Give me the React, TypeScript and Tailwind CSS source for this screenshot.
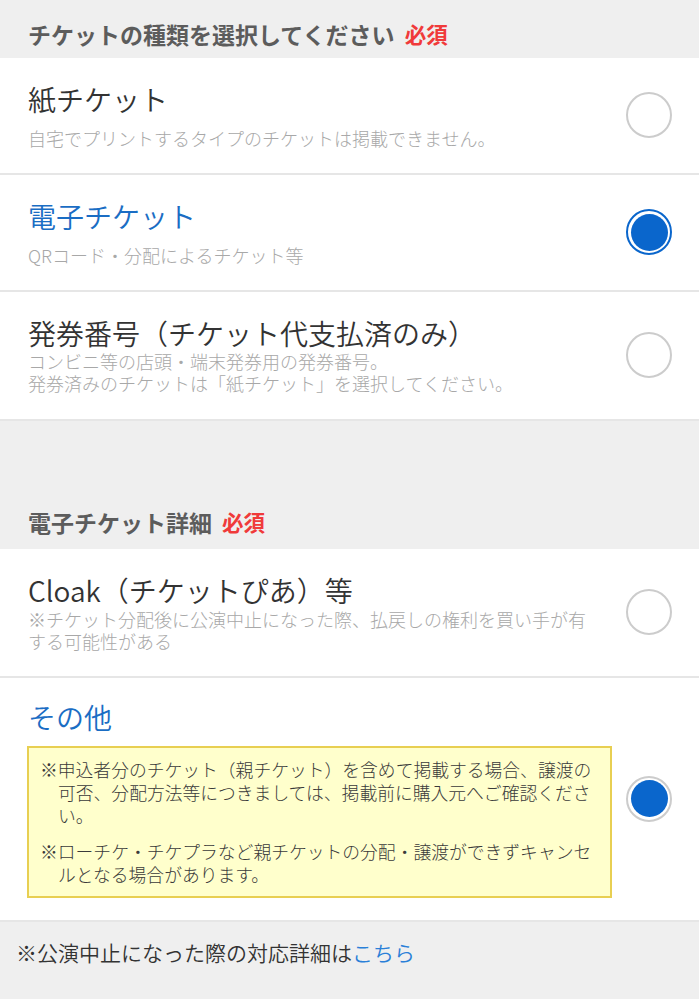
import React from "react";

function Radio({ state }: { state: "off" | "on" | "onGray" }) {
  if (state === "off") {
    return <div className="w-[46px] h-[46px] shrink-0 rounded-full border-2 border-[#cccccc] bg-white" />;
  }
  return (
    <div
      className={
        "w-[46px] h-[46px] shrink-0 rounded-full border-2 bg-white flex items-center justify-center " +
        (state === "on" ? "border-[#0a66cc]" : "border-[#cccccc]")
      }
    >
      <div className="w-[37px] h-[37px] rounded-full bg-[#0a66cc]" />
    </div>
  );
}

function Header({ label }: { label: string }) {
  return (
    <div className="flex items-center pl-[28px] text-[23px] leading-[32px] font-bold text-[#5c5c5c]">
      <span>{label}</span>
      <span className="ml-[10px] text-[#f03a3a] text-[21.5px]">必須</span>
    </div>
  );
}

export default function App() {
  const font = { fontFamily: '"Noto Sans CJK JP", "Noto Sans", sans-serif' };
  return (
    <div className="w-[699px] min-h-[999px] bg-[#efefef]" style={font}>
      {/* Header 1 */}
      <div className="pt-[18px] pb-[8px]">
        <Header label="チケットの種類を選択してください" />
      </div>

      {/* Row 1 */}
      <div className="bg-white border-b-2 border-[#e6e6e6] flex items-center pl-[28px] pr-[27px] pt-[23px] pb-[24px]">
        <div className="flex-1 flex flex-col">
          <div className="text-[28px] leading-[36px] font-[350] text-[#333333]">紙チケット</div>
          <div className="mt-[10px] text-[18px] leading-[22px] font-light text-[#a8a8a8]">
            自宅でプリントするタイプのチケットは掲載できません。
          </div>
        </div>
        <Radio state="off" />
      </div>

      {/* Row 2 */}
      <div className="bg-white border-b-2 border-[#e6e6e6] flex items-center pl-[28px] pr-[27px] pt-[23px] pb-[24px]">
        <div className="flex-1 flex flex-col">
          <div className="text-[28px] leading-[36px] font-[350] text-[#1a6dc4]">電子チケット</div>
          <div className="mt-[10px] text-[18px] leading-[22px] font-light text-[#a8a8a8]">QRコード・分配によるチケット等</div>
        </div>
        <Radio state="on" />
      </div>

      {/* Row 3 */}
      <div className="bg-white border-b-2 border-[#e6e6e6] flex items-center pl-[28px] pr-[27px] pt-[23px] pb-[25px]">
        <div className="flex-1 flex flex-col">
          <div className="text-[28px] leading-[36px] font-[350] text-[#333333]">発券番号（チケット代支払済のみ）</div>
          <div className="text-[18px] leading-[21.5px] font-light text-[#a8a8a8]">
            コンビニ等の店頭・端末発券用の発券番号。
            <br />
            発券済みのチケットは「紙チケット」を選択してください。
          </div>
        </div>
        <Radio state="off" />
      </div>

      {/* Header 2 */}
      <div className="pt-[85px] pb-[11px]">
        <Header label="電子チケット詳細" />
      </div>

      {/* Row 4 */}
      <div className="bg-white border-b-2 border-[#e6e6e6] flex items-center pl-[28px] pr-[27px] pt-[23px] pb-[24px]">
        <div className="flex-1 flex flex-col pr-[30px]">
          <div className="text-[28px] leading-[36px] font-[350] text-[#333333]">Cloak（チケットぴあ）等</div>
          <div className="text-[18px] leading-[22px] font-light text-[#a8a8a8]">
            ※チケット分配後に公演中止になった際、払戻しの権利を買い手が有する可能性がある
          </div>
        </div>
        <Radio state="off" />
      </div>

      {/* Row 5 */}
      <div className="bg-white border-b-2 border-[#e6e6e6] flex items-center pl-[27px] pr-[27px] pt-[21px] pb-[22px]">
        <div className="flex-1 flex flex-col">
          <div className="pl-[1px] text-[28px] leading-[36px] font-[350] text-[#1a6dc4]">その他</div>
          <div className="mt-[11px] border-2 border-[#e8cf52] bg-[#ffffcc] pt-[10px] pb-[10px] pl-[11px] pr-[8px] text-[17.8px] leading-[23px] font-light text-[#3a3a3a]">
            <p className="pl-[18px] -indent-[18px]">
              ※申込者分のチケット（親チケット）を含めて掲載する場合、譲渡の可否、分配方法等につきましては、掲載前に購入元へご確認ください。
            </p>
            <p className="mt-[13px] pl-[18px] -indent-[18px]">
              ※ローチケ・チケプラなど親チケットの分配・譲渡ができずキャンセルとなる場合があります。
            </p>
          </div>
        </div>
        <div className="ml-[14px]">
          <Radio state="onGray" />
        </div>
      </div>

      {/* Footer */}
      <div className="pl-[16px] pt-[15px] text-[21px] leading-[30px] font-[350] text-[#333333]">
        ※公演中止になった際の対応詳細は<span className="text-[#2a80d8]">こちら</span>
      </div>
    </div>
  );
}
